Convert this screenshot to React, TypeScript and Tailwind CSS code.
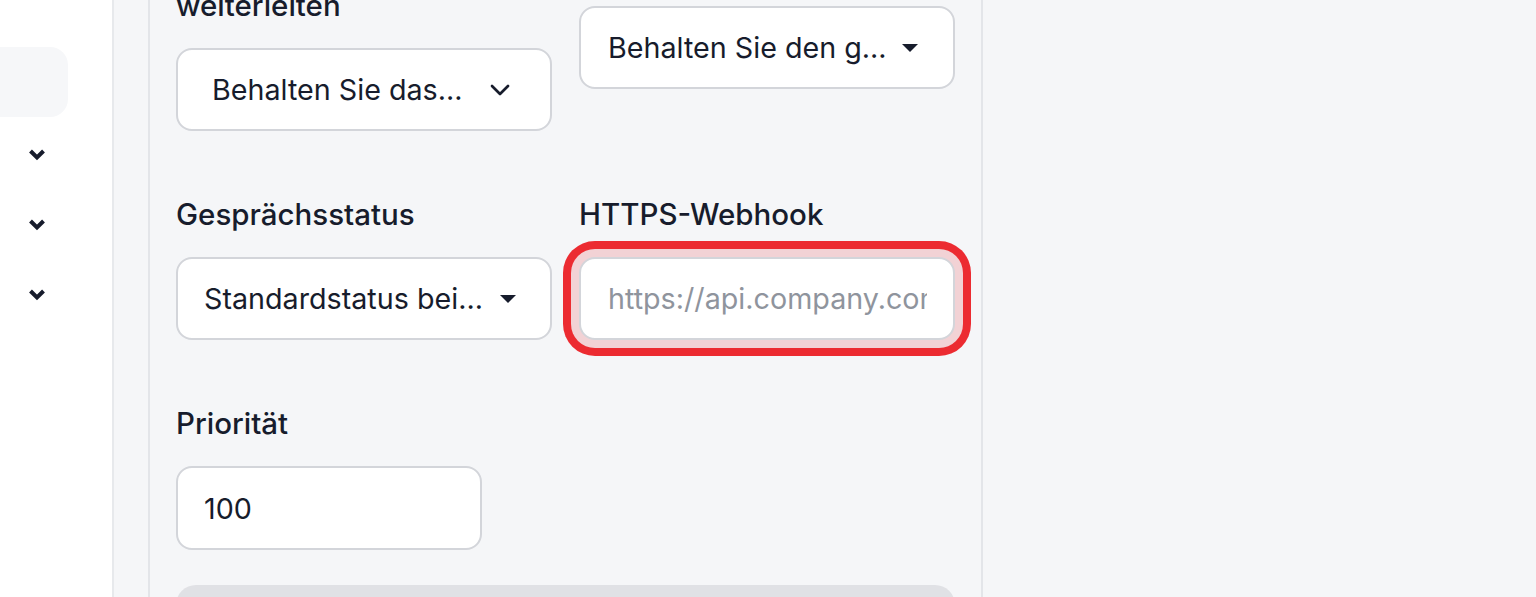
import React from "react";
import { ChevronDown } from "lucide-react";

const Caret = () => (
  <svg width="16" height="8" viewBox="0 0 16 8" className="shrink-0">
    <polygon points="0,0 16,0 8,8" fill="#171c2c" />
  </svg>
);

const SideChevron = () => (
  <svg width="18" height="13" viewBox="0 0 18 13">
    <polyline
      points="2.5,3 9,9.5 15.5,3"
      fill="none"
      stroke="#171c2c"
      strokeWidth="4"
      strokeLinejoin="miter"
    />
  </svg>
);

const Label = ({ children }: { children: React.ReactNode }) => (
  <div className="mb-[22px] whitespace-nowrap text-[29.5px] font-medium leading-[42px] text-[#171c2c]">
    {children}
  </div>
);

const App = () => {
  return (
    <div className="flex h-[597px] w-[1536px] items-stretch overflow-hidden bg-[#f5f6f8] font-['Inter',sans-serif] text-[#171c2c]">
      {/* Sidebar */}
      <aside className="w-[114px] shrink-0 border-r-2 border-[#e7e9ec] bg-white pt-[47px]">
        <div className="-ml-[20px] h-[70px] w-[88px] rounded-[18px] bg-[#f6f7f9]" />
        {[0, 1, 2].map((i) => (
          <div key={i} className="flex h-[70px] w-[74px] items-center justify-center pt-[5px]">
            <SideChevron />
          </div>
        ))}
      </aside>

      {/* Main */}
      <div className="flex shrink-0 items-stretch pl-[34px]">
        <section className="w-[835px] overflow-hidden border-x-2 border-[#e3e5e9] px-[26px]">
          <div className="-mt-[58px] grid grid-cols-2 items-start gap-x-[27px] gap-y-[62px]">
            {/* Row 1 */}
            <div>
              <Label>
                Anrufe
                <br />
                weiterleiten
              </Label>
              <div className="flex h-[83px] items-center justify-between rounded-[16px] border-2 border-[#d3d5da] bg-white pl-[34px] pr-[34px] text-[28.7px]">
                <span>Behalten Sie das...</span>
                <ChevronDown size={32} strokeWidth={2} className="shrink-0" />
              </div>
            </div>
            <div>
              <Label>Wartemusik</Label>
              <div className="flex h-[83px] items-center justify-between rounded-[16px] border-2 border-[#d3d5da] bg-white pl-[27px] pr-[35px] text-[28.7px]">
                <span>Behalten Sie den g...</span>
                <Caret />
              </div>
            </div>

            {/* Row 2 */}
            <div>
              <Label>Gesprächsstatus</Label>
              <div className="flex h-[83px] items-center justify-between rounded-[16px] border-2 border-[#d3d5da] bg-white pl-[26px] pr-[34px] text-[28.7px]">
                <span>Standardstatus bei...</span>
                <Caret />
              </div>
            </div>
            <div>
              <Label>HTTPS-Webhook</Label>
              <input
                readOnly
                placeholder="https://api.company.com/webhook"
                className="block h-[83px] w-full rounded-[16px] border-2 border-[#d3d5da] bg-white pl-[27px] pr-[26px] text-[28.7px] shadow-[0_0_0_8px_#f2d2d5,0_0_0_16px_#ec2b31] outline-none placeholder:text-[#8f949d]"
              />
            </div>

            {/* Row 3 */}
            <div>
              <Label>Priorität</Label>
              <input
                readOnly
                value="100"
                className="block h-[84px] w-[306px] rounded-[16px] border-2 border-[#d3d5da] bg-white pl-[26px] text-[28.7px] text-[#171c2c] outline-none"
              />
            </div>
          </div>

          <div className="mt-[35px] h-[40px] rounded-t-[20px] bg-[#e0e1e5]" />
        </section>
      </div>
    </div>
  );
};

export default App;
